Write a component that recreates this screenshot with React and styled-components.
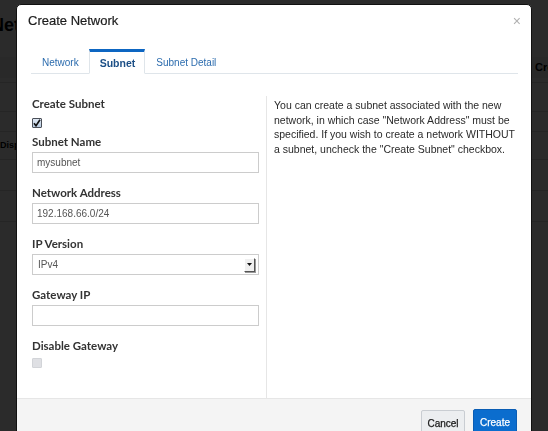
import React from 'react';
import styled, { createGlobalStyle } from 'styled-components';

const GlobalStyle = createGlobalStyle`
  html, body {
    margin: 0;
    padding: 0;
    background: #ffffff;
    overflow: hidden;
  }
  body {
    font-family: "Liberation Sans", Arial, sans-serif;
  }
`

/* ---- page behind the dialog ---- */

const Page = styled.div`
  width: 548px;
  height: 431px;
  background: #ffffff;
  color: #000;
`

const PageTitle = styled.h1`
  margin: 0 0 0 -9px;
  padding-top: 15px;
  height: 57px;
  box-sizing: border-box;
  font-size: 18px;
  line-height: 20px;
  font-weight: bold;
`

const Toolbar = styled.div`
  display: flex;
  justify-content: flex-end;
  height: 21px;
  background: #f2f2f2;
`

const ToolbarButton = styled.span`
  width: 13px;
  overflow: hidden;
  white-space: nowrap;
  font-size: 11px;
  font-weight: bold;
  line-height: 21px;
`

const TableRow = styled.div`
  height: ${p => p.$h}px;
  border-bottom: 1px solid #d8d8d8;
  font-size: 9px;
  font-weight: bold;
  line-height: ${p => p.$h}px;
`

/* ---- dialog ---- */

const Backdrop = styled.div`
  position: fixed;
  inset: 0;
  background: rgba(0, 0, 0, 0.83);
  display: flex;
  justify-content: center;
  padding-top: 4px;
`

const Dialog = styled.div`
  width: 516px;
  height: 460px;
  box-sizing: border-box;
  background: #ffffff;
  border: 1px solid #111;
  border-radius: 5px;
  display: flex;
  flex-direction: column;
  overflow: hidden;
`

const Header = styled.div`
  display: flex;
  justify-content: space-between;
  align-items: center;
  padding: 8px 10px 0 11px;
  height: 16px;
`

const Title = styled.h3`
  margin: 0;
  font-size: 13px;
  line-height: 16px;
  font-weight: normal;
  color: #1d1d1d;
  -webkit-text-stroke: 0.2px #1d1d1d;
`

const Close = styled.span`
  font-size: 14px;
  line-height: 14px;
  color: #b0b0b0;
`

const Tabs = styled.div`
  display: flex;
  margin: 20px 13px 0 14px;
  border-bottom: 1px solid #dfe5ea;
`

const Tab = styled.span`
  height: 25px;
  box-sizing: border-box;
  padding: 0 9px 0 10px;
  margin-bottom: -1px;
  font-size: ${p => (p.$active ? '10.5px' : '10px')};
  font-weight: ${p => (p.$active ? 'bold' : 'normal')};
  line-height: 22px;
  color: ${p => (p.$active ? '#1c4f86' : '#2c6cae')};
  border-top: 3px solid ${p => (p.$active ? '#0d66c2' : 'transparent')};
  border-left: 1px solid ${p => (p.$active ? '#dfe5ea' : 'transparent')};
  border-right: 1px solid ${p => (p.$active ? '#dfe5ea' : 'transparent')};
  border-bottom: 1px solid ${p => (p.$active ? '#ffffff' : 'transparent')};
`

const Body = styled.div`
  display: flex;
  padding: 22px 13px 0 15px;
  height: 302px;
`

const FormColumn = styled.div`
  width: 227px;
  padding-right: 7px;
  padding-bottom: 8px;
  border-right: 1px solid #e6e6e6;
`

const HelpColumn = styled.div`
  flex: 1;
  padding-left: 7px;
`

const HelpText = styled.p`
  margin: 0;
  padding-top: 2px;
  font-size: 10.5px;
  line-height: 14.5px;
  color: #2a2a2a;
`

const Group = styled.div`
  margin-bottom: ${p => p.$mb ?? 12}px;
`

const Label = styled.label`
  display: block;
  margin-bottom: 2px;
  font-family: Lato, "Liberation Sans", sans-serif;
  font-size: 11.5px;
  line-height: 16px;
  font-weight: bold;
  color: #333;
`

const Input = styled.input`
  display: block;
  width: 227px;
  height: 21px;
  box-sizing: border-box;
  margin: 0;
  padding: 0 4px;
  border: 1px solid #cccccc;
  border-radius: 0;
  font-family: "Liberation Sans", Arial, sans-serif;
  font-size: 10px;
  color: #555;
  outline: none;
`

const Select = styled.div`
  display: flex;
  align-items: center;
  justify-content: space-between;
  width: 227px;
  height: 21px;
  box-sizing: border-box;
  padding: 0 3px 0 5px;
  border: 1px solid #cccccc;
  font-size: 10px;
  color: #555;
`

const SelectArrow = styled.span`
  display: flex;
  align-items: center;
  justify-content: center;
  width: 9px;
  height: 12px;
  background: #f0f0f0;
  border-top: 1px solid #ffffff;
  border-left: 1px solid #ffffff;
  border-right: 1px solid #555;
  border-bottom: 1px solid #555;
  box-shadow: 1px 1px 0 #999;
`

const Check = styled.span`
  display: block;
  width: 10px;
  height: 10px;
  box-sizing: border-box;
  margin: ${p => p.$m};
  border: 1px solid ${p => (p.$disabled ? '#d2d4d8' : '#4a4f58')};
  background: ${p => (p.$disabled ? '#dfe0e4' : 'linear-gradient(#dfe8f3, #b9cbe0)')};
  border-radius: 1px;
`

const Footer = styled.div`
  display: flex;
  justify-content: flex-end;
  gap: 8px;
  padding: 10px 14px 0 0;
  flex: 1;
  background: #f4f4f4;
  border-top: 1px solid #e6e6e6;
`

const Button = styled.button`
  height: 28px;
  width: 44px;
  padding: 0;
  margin-top: ${p => (p.$primary ? '0' : '1px')};
  border-radius: 2px;
  border: 1px solid ${p => (p.$primary ? '#0a5db4' : '#c9cdd2')};
  background: ${p => (p.$primary ? '#0b6dce' : '#eceef0')};
  color: ${p => (p.$primary ? '#ffffff' : '#1a1a1a')};
  font-family: "Liberation Sans", Arial, sans-serif;
  font-size: 10px;
  line-height: 20px;
  align-self: flex-start;
  text-align: center;
  -webkit-text-stroke: 0.25px ${p => (p.$primary ? '#ffffff' : '#1a1a1a')};
`

const CheckMark = () => (
  <svg width="8" height="8" viewBox="0 0 8 8" style={{ display: 'block' }}>
    <path d="M1 4.2 L3 6.8 L7 0.8" fill="none" stroke="#111" strokeWidth="1.6" />
  </svg>
)

export default function App() {
  return (
    <>
      <GlobalStyle />
      <Page>
        <PageTitle>Networks</PageTitle>
        <Toolbar>
          <ToolbarButton>Create Network</ToolbarButton>
        </Toolbar>
        <TableRow $h={4} />
        <TableRow $h={28} />
        <TableRow $h={19} />
        <TableRow $h={27}>Display Name</TableRow>
        <TableRow $h={30} />
        <TableRow $h={30} />
      </Page>

      <Backdrop>
        <Dialog>
          <Header>
            <Title>Create Network</Title>
            <Close>×</Close>
          </Header>

          <Tabs>
            <Tab>Network</Tab>
            <Tab $active>Subnet</Tab>
            <Tab>Subnet Detail</Tab>
          </Tabs>

          <Body>
            <FormColumn>
              <Group $mb={6}>
                <Label>Create Subnet</Label>
                <Check $m="6px 0 0 0">
                  <CheckMark />
                </Check>
              </Group>
              <Group>
                <Label>Subnet Name</Label>
                <Input defaultValue="mysubnet" />
              </Group>
              <Group>
                <Label>Network Address</Label>
                <Input defaultValue="192.168.66.0/24" />
              </Group>
              <Group>
                <Label>IP Version</Label>
                <Select>
                  <span>IPv4</span>
                  <SelectArrow>
                    <svg width="5" height="3" viewBox="0 0 5 3">
                      <path d="M0 0 H5 L2.5 3 Z" fill="#111" />
                    </svg>
                  </SelectArrow>
                </Select>
              </Group>
              <Group>
                <Label>Gateway IP</Label>
                <Input defaultValue="" />
              </Group>
              <Group $mb={0}>
                <Label>Disable Gateway</Label>
                <Check $disabled $m="4px 0 0 0" />
              </Group>
            </FormColumn>
            <HelpColumn>
              <HelpText>
                You can create a subnet associated with the new network, in which case
                "Network Address" must be specified. If you wish to create a network
                WITHOUT a subnet, uncheck the "Create Subnet" checkbox.
              </HelpText>
            </HelpColumn>
          </Body>

          <Footer>
            <Button>Cancel</Button>
            <Button $primary>Create</Button>
          </Footer>
        </Dialog>
      </Backdrop>
    </>
  );
}
